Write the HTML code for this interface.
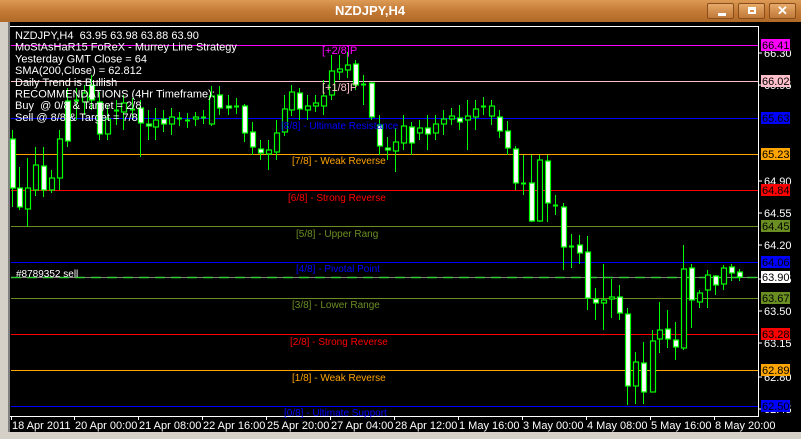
<!DOCTYPE html>
<html><head><meta charset="utf-8"><style>
html,body{margin:0;padding:0;width:801px;height:439px;overflow:hidden;background:#d4d0c8;font-family:"Liberation Sans",sans-serif}
#title{position:absolute;left:0;top:0;width:801px;height:22px;background:linear-gradient(#dc9a55,#c47a35 50%,#b06a28)}
#title .t{position:absolute;left:335px;top:3px;color:#fff;font-weight:bold;font-size:13px}
.btn{position:absolute;top:3px;width:27px;height:16px;border:1px solid #8a4e1c;border-radius:2px;background:linear-gradient(#e7aa6a,#c07838);box-sizing:border-box}
#chart{position:absolute;left:8px;top:22px;width:793px;height:410px;background:#000;border-left:2px solid #808080}
svg text{font-family:"Liberation Sans",sans-serif}
</style></head><body>
<div id="title"><span class="t">NZDJPY,H4</span>
<div class="btn" style="left:707px"><div style="position:absolute;left:10px;top:9px;width:8px;height:3px;background:#fff"></div></div>
<div class="btn" style="left:738px"><div style="position:absolute;left:9px;top:3px;width:8px;height:7px;border:2px solid #fff;border-top-width:3px;box-sizing:border-box"></div></div>
<div class="btn" style="left:769px;color:#fff;font-weight:bold;font-size:13px;text-align:center;line-height:14px">✕</div>
</div>
<div id="chart"></div>
<svg id="s" width="801" height="439" style="position:absolute;left:0;top:0">
<g id="lv"></g><g id="cd"></g><g id="tx"></g>
</svg>
<script>
var lines=[[45,'#ff00ff','66.41','#ff00ff','#000'],[81,'#ffc0cb','66.02','#ffc0cb','#000'],[118,'#0000ff','65.63','#0000ff','#000'],[154,'#ffa500','65.23','#ffa500','#000'],[190,'#ff0000','64.84','#ff0000','#000'],[226,'#6b8e23','64.45','#6b8e23','#000'],[262,'#0000ff','64.06','#0000ff','#000'],[298,'#6b8e23','63.67','#6b8e23','#000'],[334,'#ff0000','63.28','#ff0000','#000'],[370,'#ffa500','62.89','#ffa500','#000'],[406,'#0000ff','62.50','#0000ff','#000']];
var h='';
h+='<line x1="10" y1="26.5" x2="758" y2="26.5" stroke="#fff"/><line x1="758.5" y1="26" x2="758.5" y2="416" stroke="#fff"/><line x1="10" y1="416.5" x2="759" y2="416.5" stroke="#fff"/>';
lines.forEach(function(l){h+='<line x1="11" y1="'+(l[0]+.5)+'" x2="758" y2="'+(l[0]+.5)+'" stroke="'+l[1]+'"/>';});
h+='<line x1="11" y1="277.5" x2="758" y2="277.5" stroke="#808080"/><line x1="11" y1="277.5" x2="758" y2="277.5" stroke="#32cd32" stroke-dasharray="10,6" stroke-width="1.5"/>';
document.getElementById('lv').innerHTML=h;
var C=[[12,139,188,'w',130,207],[19,188,207,'w',167,210],[27,188,209,'o',158,227],[35,165,190,'o',147,196],[43,166,190,'w',147,197],[51,178,190,'o',170,193],[59,139,178,'o',130,190],[67,101,141,'w',88,147],[76,100,100,'d',88,120],[84,93,102,'o',85,115],[91,85,100,'w',75,110],[99,102,134,'w',92,140],[107,119,134,'o',105,140],[116,110,110,'d',100,125],[123,103,112,'o',95,130],[132,109,109,'d',98,120],[140,108,123,'w',100,157],[148,124,126,'w',110,140],[155,120,127,'o',108,140],[163,119,124,'w',110,132],[171,117,124,'o',108,135],[179,118,118,'d',112,126],[187,120,120,'d',113,128],[195,117,119,'o',112,126],[203,117,117,'d',110,124],[211,96,124,'o',86,126],[219,95,108,'w',86,115],[228,106,107,'w',95,115],[236,106,106,'d',98,114],[244,106,133,'w',104,142],[252,132,147,'w',122,155],[260,149,153,'w',140,160],[268,150,154,'o',140,170],[276,133,152,'o',120,160],[284,109,132,'o',95,136],[291,92,110,'o',85,116],[299,93,109,'w',88,120],[307,106,110,'o',95,120],[315,103,106,'o',95,112],[323,96,106,'o',80,115],[331,71,95,'o',55,100],[339,69,72,'o',55,80],[347,65,70,'o',52,78],[355,64,85,'w',60,90],[363,84,84,'d',75,105],[371,83,117,'w',82,120],[379,125,146,'w',115,155],[387,148,150,'w',137,160],[395,142,151,'o',128,172],[403,126,143,'o',115,150],[411,127,143,'w',122,155],[419,128,133,'o',120,140],[427,128,134,'w',115,150],[435,124,133,'o',115,140],[443,119,124,'o',110,135],[451,116,119,'o',108,125],[459,118,122,'w',105,130],[467,116,120,'o',100,150],[475,109,117,'o',100,130],[483,106,106,'d',97,115],[491,106,116,'o',100,125],[499,117,131,'w',110,138],[507,131,148,'w',121,155],[515,149,183,'w',146,190],[523,183,183,'d',155,195],[531,183,221,'w',155,222],[539,160,221,'o',155,222],[547,161,203,'w',155,222],[555,205,205,'d',195,215],[563,207,247,'w',203,270],[571,246,246,'d',234,268],[579,245,253,'w',235,264],[587,252,298,'w',236,310],[595,299,303,'w',288,320],[603,300,303,'o',264,330],[611,297,299,'o',279,318],[619,297,313,'w',285,320],[627,314,386,'w',308,405],[635,362,386,'o',352,404],[643,363,392,'w',342,404],[652,341,392,'o',330,392],[659,330,339,'o',302,353],[667,329,339,'w',310,348],[675,340,347,'w',322,360],[683,269,348,'o',245,350],[691,268,300,'w',264,328],[699,293,302,'o',290,308],[707,275,290,'o',270,308],[715,276,285,'w',275,295],[723,268,284,'o',265,290],[731,267,273,'w',264,281],[739,272,277,'w',269,281]];
var g='';
C.forEach(function(c){var x=c[0];
g+='<line x1="'+(x+.5)+'" y1="'+c[4]+'" x2="'+(x+.5)+'" y2="'+c[5]+'" stroke="#00ff00"/>';
if(c[3]=='d'){g+='<line x1="'+(x-2)+'" y1="'+(c[1]+.5)+'" x2="'+(x+3)+'" y2="'+(c[1]+.5)+'" stroke="#00ff00" stroke-width="2"/>';}
else{g+='<rect x="'+(x-1.5)+'" y="'+c[1]+'" width="5" height="'+Math.max(2,c[2]-c[1])+'" fill="'+(c[3]=='w'?'#fff':'#000')+'" stroke="#00ff00" stroke-width="1.2"/>';}
});
document.getElementById('cd').innerHTML=g;
var t='';
function T(x,y,s,c,fs){t+='<text x="'+x+'" y="'+y+'" fill="'+c+'" font-size="'+(fs||11)+'">'+s+'</text>';}
var info=['NZDJPY,H4  63.95 63.98 63.88 63.90','MoStAsHaR15 FoReX - Murrey Line Strategy','Yesterday GMT Close = 64','SMA(200,Close) = 62.812','Daily Trend is Bullish','RECOMMENDATIONS (4Hr Timeframe):','Buy  @ 0/8 &amp; Target = 2/8','Sell @ 8/8 &amp; Target = 7/8'];
T(322,54,'[+2/8]P','#ff00ff');T(322,91,'[+1/8]P','#ffc0cb');
var lab=[[281,129,'[8/8] - Ultimate Resistance','#0000ff'],[292,164,'[7/8] - Weak Reverse','#ffa500'],[288,201,'[6/8] - Strong Reverse','#ff0000'],[296,237,'[5/8] - Upper Rang','#6b8e23'],[296,272,'[4/8] - Pivotal Point','#0000ff'],[292,308,'[3/8] - Lower Range','#6b8e23'],[290,345,'[2/8] - Strong Reverse','#ff0000'],[292,381,'[1/8] - Weak Reverse','#ffa500'],[284,416,'[0/8] - Ultimate Support','#0000ff']];
lab.forEach(function(l){T(l[0],l[1],l[2],l[3],10);});
info.forEach(function(s,i){T(15,39+i*11.7,s.replace(/ /g,'&#160;'),'#fff');});
T(16,277,'#8789352 sell','#fff',10);
[[56,'66.30'],[88,'65.95'],[184,'64.90'],[216,'64.55'],[248,'64.20'],[282,'63.85'],[314,'63.50'],[346,'63.15'],[380,'62.80'],[412,'62.45']].forEach(function(p){t+='<line x1="759" y1="'+(p[0]-3)+'" x2="762" y2="'+(p[0]-3)+'" stroke="#fff"/>';T(764,p[0]+1,p[1],'#fff',11);});
lines.forEach(function(l){t+='<rect x="761" y="'+(l[0]-6)+'" width="29" height="12" fill="'+l[3]+'"/>';T(762,l[0]+4,l[2],l[4],11);});
t+='<rect x="761" y="271" width="29" height="12" fill="#fff"/>';T(762,281,'63.90','#000',11);
var ax=[[11,'18 Apr 2011'],[74,'20 Apr 00:00'],[138,'21 Apr 08:00'],[202,'22 Apr 16:00'],[266,'25 Apr 20:00'],[330,'27 Apr 04:00'],[394,'28 Apr 12:00'],[458,'1 May 16:00'],[522,'3 May 00:00'],[586,'4 May 08:00'],[650,'5 May 16:00'],[714,'8 May 20:00']];
ax.forEach(function(a){t+='<line x1="'+(a[0]+.5)+'" y1="416" x2="'+(a[0]+.5)+'" y2="420" stroke="#fff"/>';T(a[0]+1,429,a[1],'#fff',11);});
document.getElementById('tx').innerHTML=t;
</script>
</body></html>
